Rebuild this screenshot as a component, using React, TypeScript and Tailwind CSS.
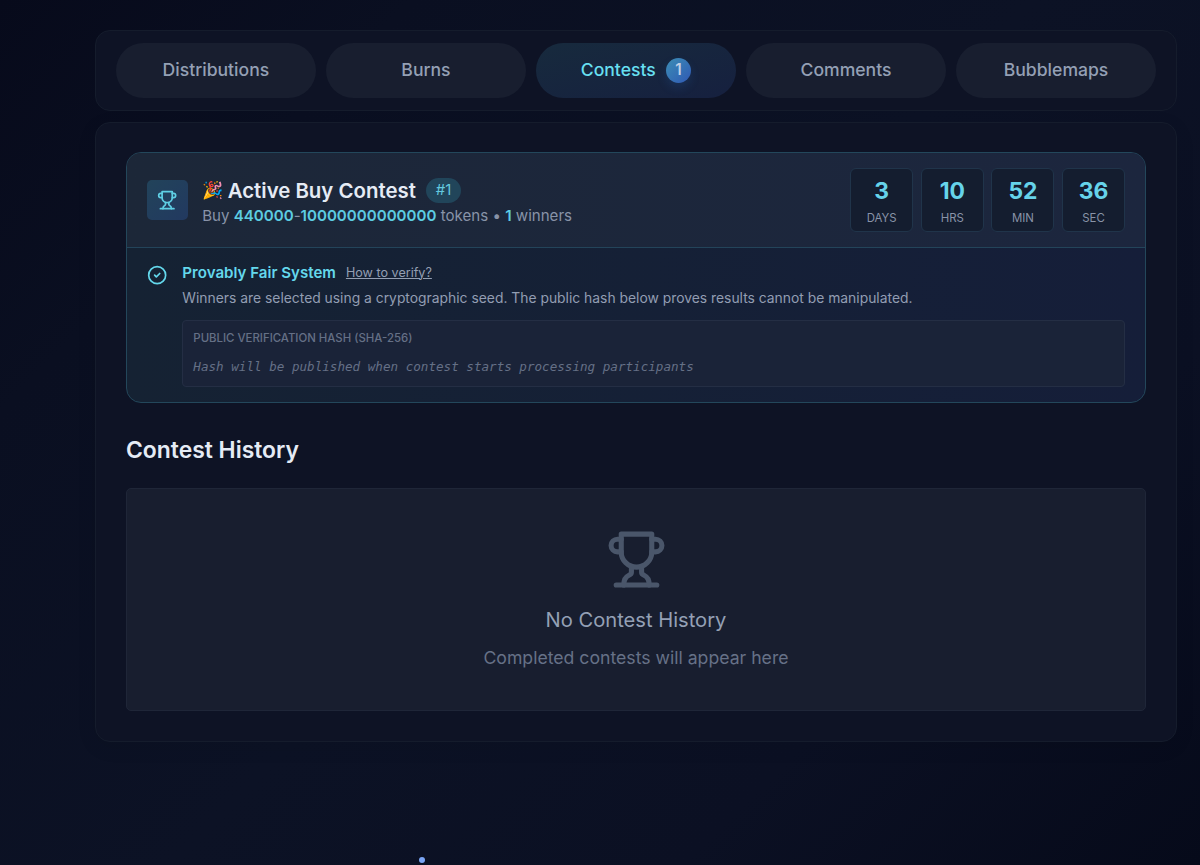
import { ReactNode } from "react";
import { CircleCheck } from "lucide-react";

function Trophy({ className }: { className: string }) {
  return (
    <svg
      viewBox="0 0 24 24"
      fill="none"
      stroke="currentColor"
      strokeWidth="2"
      strokeLinecap="round"
      strokeLinejoin="round"
      className={className}
    >
      <path d="M6 9H4.5a2.5 2.5 0 0 1 0-5H6" />
      <path d="M18 9h1.5a2.5 2.5 0 0 0 0-5H18" />
      <path d="M4 22h16" />
      <path d="M10 14.66V17c0 .55-.47.98-.97 1.21C7.85 18.75 7 20.24 7 22" />
      <path d="M14 14.66V17c0 .55.47.98.97 1.21C16.15 18.75 17 20.24 17 22" />
      <path d="M18 2H6v7a6 6 0 0 0 12 0V2Z" />
    </svg>
  );
}

function Tab({ children, active }: { children: ReactNode; active?: boolean }) {
  return (
    <button
      className={
        "flex h-[55px] flex-1 basis-0 items-center justify-center gap-[10px] rounded-full text-[17.6px] font-medium " +
        (active
          ? "bg-linear-to-br from-[#172a3d] to-[#16203f] text-[#67dff0]"
          : "bg-[#181e2f] text-[#94a0b5]")
      }
    >
      {children}
    </button>
  );
}

const countdown = [
  { value: "3", label: "DAYS" },
  { value: "10", label: "HRS" },
  { value: "52", label: "MIN" },
  { value: "36", label: "SEC" },
];

export default function App() {
  return (
    <div className="relative h-[865px] w-[1200px] overflow-hidden bg-[linear-gradient(135deg,#070a1b_0%,#0a0f21_20%,#0c1225_50%,#0b1023_75%,#060a1a_100%)] pt-[29.5px] pr-[23px] pl-[95px] font-[Inter,sans-serif]">
      <nav className="flex h-[81.5px] gap-[10.2px] rounded-[15px] border border-[#151c2c] bg-[#0e1325] px-[20px] pt-[12.5px]">
        <Tab>Distributions</Tab>
        <Tab>Burns</Tab>
        <Tab active>
          Contests
          <span className="flex size-[25.4px] items-center justify-center rounded-full bg-linear-to-br from-[#3d8db4] to-[#3158b4] text-[15.3px] font-semibold text-[#c0cfe6] shadow-[0_5px_10px_rgba(34,100,180,0.2)]">
            1
          </span>
        </Tab>
        <Tab>Comments</Tab>
        <Tab>Bubblemaps</Tab>
      </nav>

      <main className="mt-[10.5px] h-[620.5px] rounded-[15px] border border-[#151c2c] bg-[#0e1325] px-[30px] pt-[29.5px] shadow-[0_5px_20px_rgba(0,0,0,0.08)]">
        <section className="flex h-[250.5px] flex-col overflow-hidden rounded-[15px] border border-[#23475b] bg-linear-to-r from-[#152233] to-[#151e39]">
          <header className="flex h-[95px] shrink-0 items-center border-b border-[#23445a] bg-linear-to-r from-[#1c2738] to-[#1c263e] px-[20px]">
            <div className="flex size-[40.7px] items-center justify-center rounded-[5px] bg-linear-to-br from-[#22435a] to-[#223960] text-[#5fcfe5]">
              <Trophy className="size-[20.35px]" />
            </div>
            <div className="ml-[14.5px] flex-1 pt-[5px]">
              <div className="flex h-[25.5px] items-center">
                <span className="w-[25.5px] text-[17px] leading-[25px]">🎉</span>
                <h2 className="text-[20.4px] leading-[25px] font-semibold text-[#e5ebf5]">Active Buy Contest</h2>
                <span className="ml-[10px] flex h-[25px] items-center rounded-full bg-[#21455a] px-[10px] text-[15px] text-[#63c9df]">
                  #1
                </span>
              </div>
              <p className="h-[25px] text-[15.1px] leading-[25px] text-[#8893a8]">
                Buy <b className="font-semibold text-[#5ccde2]">440000</b>-
                <b className="font-semibold text-[#5ccde2]">10000000000000</b> tokens •{" "}
                <b className="font-semibold text-[#5ccde2]">1</b> winners
              </p>
            </div>
            <div className="flex gap-[7.6px]">
              {countdown.map((c) => (
                <div
                  key={c.label}
                  className="flex h-[64px] w-[63px] flex-col items-center rounded-[6px] border border-[#20344a] bg-[#141d2f]"
                >
                  <span className="mt-[8px] text-[22.9px] leading-[28px] font-bold text-[#66d3ea]">{c.value}</span>
                  <span className="mt-[6px] text-[11.4px] leading-[14px] text-[#8993a7]">{c.label}</span>
                </div>
              ))}
            </div>
          </header>
          <div className="flex px-[20px] pt-[15px]">
            <CircleCheck className="mt-[2px] size-[20.35px] shrink-0 text-[#64d8ec]" />
            <div className="ml-[15px] flex-1">
              <div className="flex h-[20px] items-center">
                <h3 className="text-[15.1px] font-semibold text-[#64d8ec]">Provably Fair System</h3>
                <a className="ml-[10px] text-[12.6px] text-[#939eb2] underline">How to verify?</a>
              </div>
              <p className="mt-[5px] h-[21px] text-[13.87px] leading-[21px] text-[#929db2]">
                Winners are selected using a cryptographic seed. The public hash below proves results cannot be
                manipulated.
              </p>
              <div className="mt-[11px] h-[67px] rounded-[4px] border border-[#242e44] bg-[#1a2338] px-[10px] pt-[9px]">
                <div className="text-[11.4px] leading-[16px] font-medium text-[#657086]">
                  PUBLIC VERIFICATION HASH (SHA-256)
                </div>
                <div className="mt-[12px] font-['DejaVu_Sans_Mono',monospace] text-[12.6px] leading-[18px] text-[#657086] italic">
                  Hash will be published when contest starts processing participants
                </div>
              </div>
            </div>
          </div>
        </section>

        <h2 className="mt-[31.5px] text-[22.9px] leading-[32px] font-semibold text-[#e5ebf5]">Contest History</h2>

        <section className="mt-[22px] flex h-[223px] flex-col items-center rounded-[5px] border border-[#1f2638] bg-[#181e2f] pt-[40px]">
          <Trophy className="size-[61px] text-[#4a566a]" />
          <p className="mt-[15px] text-[20.15px] leading-[30px] text-[#94a0b5]">No Contest History</p>
          <p className="mt-[9px] text-[17.65px] leading-[27px] text-[#667187]">Completed contests will appear here</p>
        </section>
      </main>

      <span className="absolute top-[857px] left-[419px] size-[6px] rounded-full bg-[#7ba5f5]" />
    </div>
  );
}
